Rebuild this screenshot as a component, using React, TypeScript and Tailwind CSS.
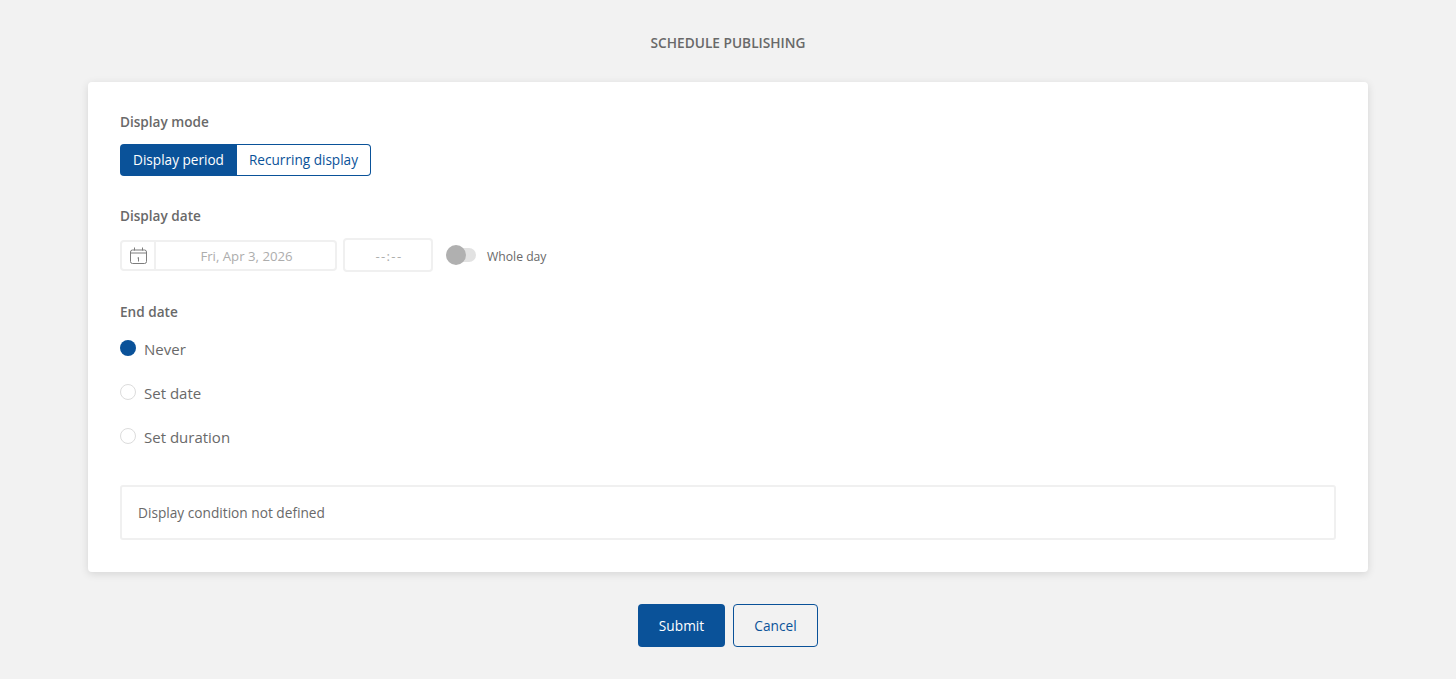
export default function App() {
  return (
    <div className="min-h-[679px] bg-[#f2f2f2] font-['Open_Sans','Noto_Sans',sans-serif] text-[#696969]">
      <div className="flex h-[82px] items-start justify-center pt-[34px]">
        <h1 className="text-[13.7px] leading-[18px] font-semibold text-[#696969]">SCHEDULE PUBLISHING</h1>
      </div>

      <div className="mx-[88px] h-[490px] rounded-[4px] bg-white px-8 pt-[31px] shadow-[0_2px_8px_rgba(0,0,0,0.12)]">
        <div className="text-[13.6px] leading-[18px] font-semibold">Display mode</div>
        <div className="mt-[13px] flex h-8 w-[251px] text-[13.6px]">
          <button className="w-[117px] rounded-l-[4px] bg-[#0a5299] text-white">Display period</button>
          <button className="flex-1 rounded-r-[4px] border border-l-0 border-[#0a5299] bg-white text-[#0a5299]">Recurring display</button>
        </div>

        <div className="mt-[31px] text-[13.6px] leading-[18px] font-semibold">Display date</div>
        <div className="mt-[13px] flex h-[34px] items-center">
          <div className="mt-px flex h-[31px] w-[36px] items-center justify-center rounded-l-[4px] border-2 border-[#f0f0f0]">
            <svg width="17" height="17" viewBox="0 0 17 17" fill="none" stroke="#7d7d7d" strokeWidth="1">
              <rect x="0.5" y="3" width="16" height="13.5" rx="2" />
              <path d="M0.5 6h16M4.5 0.5v3M12.5 0.5v3M7.5 11l1-.5v4" />
            </svg>
          </div>
          <div className="mt-px flex h-[31px] w-[181px] items-center justify-center rounded-r-[4px] border-2 border-l-0 border-[#f0f0f0] pt-[3px] pl-[2px] text-[13.2px] text-[#adadad]">
            Fri, Apr 3, 2026
          </div>
          <div className="ml-[6px] flex h-[34px] w-[90px] items-center justify-center rounded-[4px] border-2 border-[#f0f0f0] pt-[4px] pl-[2px] text-[13.2px] tracking-[1.3px] text-[#adadad]">
            --:--
          </div>
          <div className="relative ml-[13px] h-[14px] w-[30px] rounded-full bg-[#e2e2e2]">
            <div className="absolute top-[-3px] left-0 size-5 rounded-full bg-[#b0b0b0]" />
          </div>
          <span className="mt-[4px] ml-[11px] text-[12.2px]">Whole day</span>
        </div>

        <div className="mt-[31px] text-[13.6px] leading-[18px] font-semibold">End date</div>
        <div className="mt-[20px] flex flex-col gap-[27px]">
          <label className="flex h-[17px] items-center gap-2 text-[15px]">
            <span className="-mt-[4px] size-4 rounded-full bg-[#0a5299]" />
            Never
          </label>
          <label className="flex h-[17px] items-center gap-2 text-[15px]">
            <span className="-mt-[4px] size-4 rounded-full border border-[#dcdcdc]" />
            Set date
          </label>
          <label className="flex h-[17px] items-center gap-2 text-[15px]">
            <span className="-mt-[4px] size-4 rounded-full border border-[#dcdcdc]" />
            Set duration
          </label>
        </div>

        <div className="mt-[39px] flex h-[55px] items-center rounded-[3px] border-2 border-[#f0f0f0] px-4 pt-[2px] text-[13.7px]">
          Display condition not defined
        </div>
      </div>

      <div className="mt-8 flex justify-center gap-2 text-[13.7px]">
        <button className="h-[43px] w-[87px] rounded-[4px] bg-[#0a5299] pt-[2px] font-medium text-white">Submit</button>
        <button className="h-[43px] w-[85px] rounded-[4px] border border-[#0a5299] pt-[2px] text-[#0a5299]">Cancel</button>
      </div>
    </div>
  )
}
